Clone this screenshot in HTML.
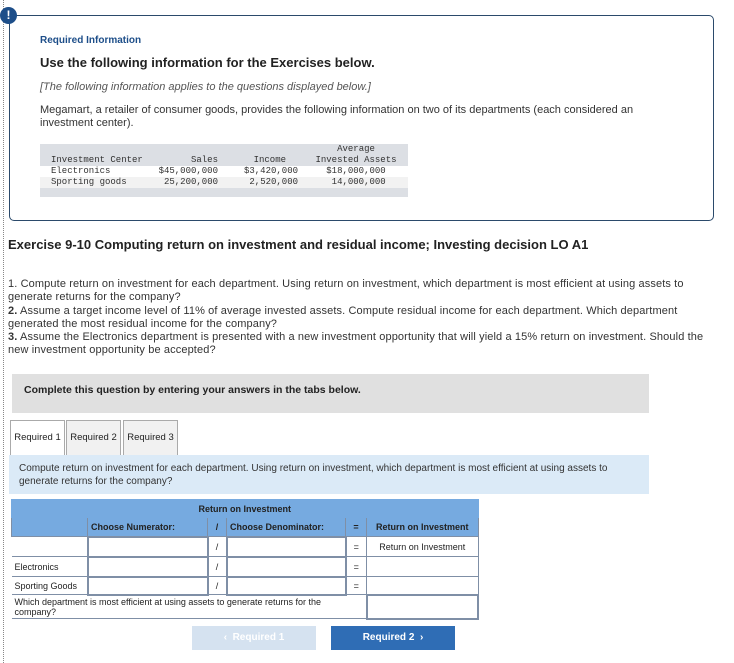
<!DOCTYPE html>
<html><head><meta charset="utf-8"><style>
*{margin:0;padding:0;box-sizing:border-box}
body{width:734px;height:663px;background:#fff;position:relative;overflow:hidden;font-family:"Liberation Sans",Arial,sans-serif;color:#222}
.a{position:absolute;white-space:nowrap}
.mono{font-family:"Liberation Mono",monospace;font-size:9px;color:#333;line-height:11px}
td{border:1px solid #7f8fa6;font-size:9px;padding:0 3px}
</style></head><body>
<div class="a" style="left:3px;top:0;height:663px;border-left:1px dotted #888"></div>
<div class="a" style="left:9px;top:15px;width:705px;height:206px;border:1px solid #2b4a6b;border-radius:5px"></div>
<div class="a" style="left:0;top:7px;width:17px;height:17px;border-radius:50%;background:#1d4e89;color:#fff;font-weight:bold;font-size:12px;text-align:center;line-height:17px">!</div>
<div class="a" style="left:40px;top:35px;font-size:10px;font-weight:bold;color:#1d4e89">Required Information</div>
<div class="a" style="left:40px;top:55px;font-size:13px;font-weight:bold;color:#222">Use the following information for the Exercises below.</div>
<div class="a" style="left:40px;top:81px;font-size:11px;font-style:italic;color:#555">[The following information applies to the questions displayed below.]</div>
<div class="a" style="left:40px;top:104px;font-size:11px;line-height:13px;color:#333">Megamart, a retailer of consumer goods, provides the following information on two of its departments (each considered an<br>investment center).</div>
<div class="a" style="left:40px;top:144px;width:368px;height:53px;background:#dcdfe4"></div>
<div class="a" style="left:40px;top:166px;width:368px;height:11px;background:#fff"></div>
<div class="a" style="left:40px;top:177px;width:368px;height:11px;background:#f2f2f2"></div>
<div class="a mono" style="left:51px;top:155px">Investment Center<br>Electronics<br>Sporting goods</div>
<div class="a mono" style="left:145px;top:155px;text-align:right;width:73px">Sales<br>$45,000,000<br>25,200,000</div>
<div class="a mono" style="left:238px;top:155px;text-align:right;width:60px"><span style="margin-right:12px">Income</span><br>$3,420,000<br>2,520,000</div>
<div class="a mono" style="left:310px;top:144px;text-align:center;width:92px">Average<br>Invested Assets<br>$18,000,000<br>&nbsp;14,000,000</div>
<div class="a" style="left:8px;top:237px;font-size:13px;font-weight:bold;color:#222">Exercise 9-10 Computing return on investment and residual income; Investing decision LO A1</div>
<div class="a" style="left:8px;top:278px;font-size:11px;letter-spacing:0.12px;line-height:13.3px;color:#333;white-space:normal;width:704px">1. Compute return on investment for each department. Using return on investment, which department is most efficient at using assets to generate returns for the company?<br><b>2.</b> Assume a target income level of 11% of average invested assets. Compute residual income for each department. Which department generated the most residual income for the company?<br><b>3.</b> Assume the Electronics department is presented with a new investment opportunity that will yield a 15% return on investment. Should the new investment opportunity be accepted?</div>
<div class="a" style="left:12px;top:374px;width:637px;height:39px;background:#e0e0e0"></div>
<div class="a" style="left:24px;top:384px;font-size:10.5px;font-weight:bold;color:#222">Complete this question by entering your answers in the tabs below.</div>
<div class="a" style="left:10px;top:420px;width:55px;height:36px;border:1px solid #aaa;border-bottom:none;background:#fff;font-size:9.5px;text-align:center;line-height:34px">Required 1</div>
<div class="a" style="left:66px;top:420px;width:55px;height:35px;border:1px solid #aaa;border-bottom:none;background:#f1f1f1;font-size:9.5px;text-align:center;line-height:34px">Required 2</div>
<div class="a" style="left:123px;top:420px;width:55px;height:35px;border:1px solid #aaa;border-bottom:none;background:#f1f1f1;font-size:9.5px;text-align:center;line-height:34px">Required 3</div>
<div class="a" style="left:9px;top:455px;width:640px;height:39px;background:#dbeaf7;font-size:10px;line-height:13px;padding:7px 10px;white-space:normal;color:#333">Compute return on investment for each department. Using return on investment, which department is most efficient at using assets to generate returns for the company?</div>
<table class="a" style="left:11px;top:499px;width:468px;border-collapse:collapse">
<tr style="height:18px;background:#76aae0"><td colspan="6" style="text-align:center;font-weight:bold;border-color:#76aae0">Return on Investment</td></tr>
<tr style="height:19px;background:#76aae0;font-weight:bold"><td style="width:76px"></td><td style="width:120px">Choose Numerator:</td><td style="width:19px;text-align:center">/</td><td style="width:119px">Choose Denominator:</td><td style="width:21px;text-align:center">=</td><td style="text-align:center">Return on Investment</td></tr>
<tr style="height:20px"><td style="border-left:none"></td><td style="border-width:2px"></td><td style="text-align:center">/</td><td style="border-width:2px"></td><td style="text-align:center">=</td><td style="text-align:center">Return on Investment</td></tr>
<tr style="height:20px"><td style="border-left:none">Electronics</td><td style="border-width:2px"></td><td style="text-align:center">/</td><td style="border-width:2px"></td><td style="text-align:center">=</td><td></td></tr>
<tr style="height:18px"><td style="border-left:none">Sporting Goods</td><td style="border-width:2px"></td><td style="text-align:center">/</td><td style="border-width:2px"></td><td style="text-align:center">=</td><td></td></tr>
<tr style="height:24px"><td colspan="5" style="border-left:none;line-height:10px;white-space:normal;padding-right:20px">Which department is most efficient at using assets to generate returns for the company?</td><td style="border-width:2px"></td></tr>
</table>
<div class="a" style="left:192px;top:626px;width:124px;height:24px;background:#d5e2f0;color:#fff;font-size:10px;font-weight:bold;text-align:center;line-height:24px">‹&nbsp; Required 1</div>
<div class="a" style="left:331px;top:626px;width:124px;height:24px;background:#2f6db5;color:#fff;font-size:10px;font-weight:bold;text-align:center;line-height:24px">Required 2 &nbsp;›</div>
</body></html>
